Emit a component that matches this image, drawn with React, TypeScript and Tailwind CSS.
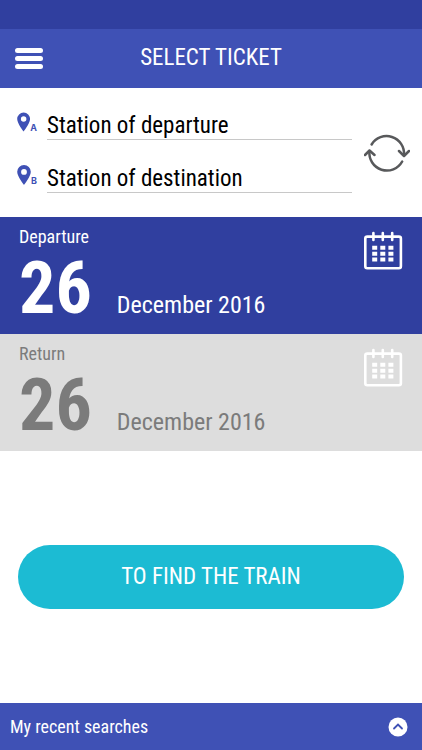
import { FC } from 'react';
import { twMerge } from 'tailwind-merge';

interface IStationFieldProps {
  id: string;
  letter: string;
  label: string;
}

interface IDatePanelProps {
  title: string;
  day: string;
  month: string;
  className?: string;
}

const CalendarIcon: FC = () => (
  <svg width="40" height="40" viewBox="0 0 40 40" fill="none" stroke="#fff" aria-hidden="true">
    <rect x="2.3" y="5.6" width="35.6" height="31.6" rx="2" strokeWidth="2.6" />
    <path d="M10.400 2v7M19.800 2v7M29.200 2v7" strokeWidth="2.6" strokeLinecap="round" />
    <path d="M9.200 16.800h21.200M9.200 22.700h21.200M9.200 28.500h21.200" strokeWidth="4" strokeDasharray="5 3.1" />
  </svg>
);

const SwapIcon: FC = () => (
  <svg
    width="46"
    height="40"
    viewBox="0 0 46 40"
    fill="none"
    stroke="#58595b"
    strokeWidth="2.5"
    strokeLinecap="round"
    strokeLinejoin="round"
    aria-hidden="true"
  >
    <path d="M7.600 11.500A17.500 17.500 0 0 1 40 22" />
    <path d="M35 18l5 5 5-5" />
    <path d="M38.200 28.500A17.500 17.500 0 0 1 5.500 18" />
    <path d="M1 22l4.500-4.500L10.500 22" />
  </svg>
);

const PinIcon: FC = () => (
  <svg width="14" height="20" viewBox="0 0 14 20" fill="#3f51b5" aria-hidden="true">
    <path
      fillRule="evenodd"
      d="M7 0a6.800 6.800 0 0 0-6.800 6.800C.2 11.500 7 20 7 20s6.800-8.500 6.800-13.200A6.800 6.800 0 0 0 7 0zm0 4a2.900 2.900 0 1 1 0 5.800A2.900 2.900 0 0 1 7 4z"
    />
  </svg>
);

const StationField: FC<IStationFieldProps> = ({ id, letter, label }) => (
  <div className="flex items-start gap-2.5">
    <label htmlFor={id} aria-label={label} className="flex w-5 items-end">
      <PinIcon />
      <span className="font-['Inter'] text-[9px] leading-none font-bold text-[#3f51b5]">{letter}</span>
    </label>
    <input
      id={id}
      type="text"
      placeholder={label}
      className="h-7 min-w-0 flex-1 border-b border-[#c8c8c8] text-[23px] leading-7 text-black outline-none placeholder:text-black"
    />
  </div>
);

const DatePanel: FC<IDatePanelProps> = ({ title, day, month, className }) => (
  <button
    type="button"
    className={twMerge('flex h-[117px] w-full items-start justify-between px-[19px] text-left', className)}
  >
    <span className="flex flex-col gap-0.5 pt-2">
      <span className="text-lg leading-6">{title}</span>
      <span className="flex items-baseline gap-[25px]">
        <span className="text-[72px] leading-[76px] font-bold">{day}</span>
        <span className="text-2xl">{month}</span>
      </span>
    </span>
    <span className="pt-3.5">
      <CalendarIcon />
    </span>
  </button>
);

const App: FC = () => {
  return (
    <div className="flex min-h-screen flex-col bg-white font-['Roboto_Condensed','Roboto',sans-serif]">
      <div className="h-[29px] bg-[#303f9f]" />
      <header className="grid h-[59px] grid-cols-[1fr_auto_1fr] items-center bg-[#3f51b5] px-[15px] text-white">
        <button type="button" aria-label="Menu" className="flex w-7 flex-col gap-[3px]">
          <span className="h-[5px] rounded-full bg-white" />
          <span className="h-[5px] rounded-full bg-white" />
          <span className="h-[5px] rounded-full bg-white" />
        </button>
        <h1 className="text-[23px]">SELECT TICKET</h1>
      </header>

      <main>
        <form className="flex h-[129px] items-center gap-3 pr-3 pl-[17px]">
          <div className="flex min-w-0 flex-1 flex-col gap-[25px]">
            <StationField id="from" letter="A" label="Station of departure" />
            <StationField id="to" letter="B" label="Station of destination" />
          </div>
          <button type="button" aria-label="Swap stations">
            <SwapIcon />
          </button>
        </form>

        <DatePanel title="Departure" day="26" month="December 2016" className="bg-[#303f9f] text-white" />
        <DatePanel title="Return" day="26" month="December 2016" className="bg-[#dddddd] text-[#7b7b7b]" />

        <div className="px-[18px] pt-[94px] pb-8">
          <button type="button" className="h-16 w-full rounded-full bg-[#1cbbd3] text-[23px] text-white">
            TO FIND THE TRAIN
          </button>
        </div>
      </main>

      <button
        type="button"
        className="mt-auto flex h-[47px] items-center justify-between bg-[#3f51b5] pr-3.5 pl-2.5 text-lg text-white"
      >
        My recent searches
        <svg width="20" height="20" viewBox="0 0 20 20" fill="none" aria-hidden="true">
          <circle cx="10" cy="10" r="9.500" fill="#fff" />
          <path d="M6 11.500l4-4 4 4" stroke="#3f51b5" strokeWidth="1.800" strokeLinecap="round" />
        </svg>
      </button>
    </div>
  );
};

export default App;
